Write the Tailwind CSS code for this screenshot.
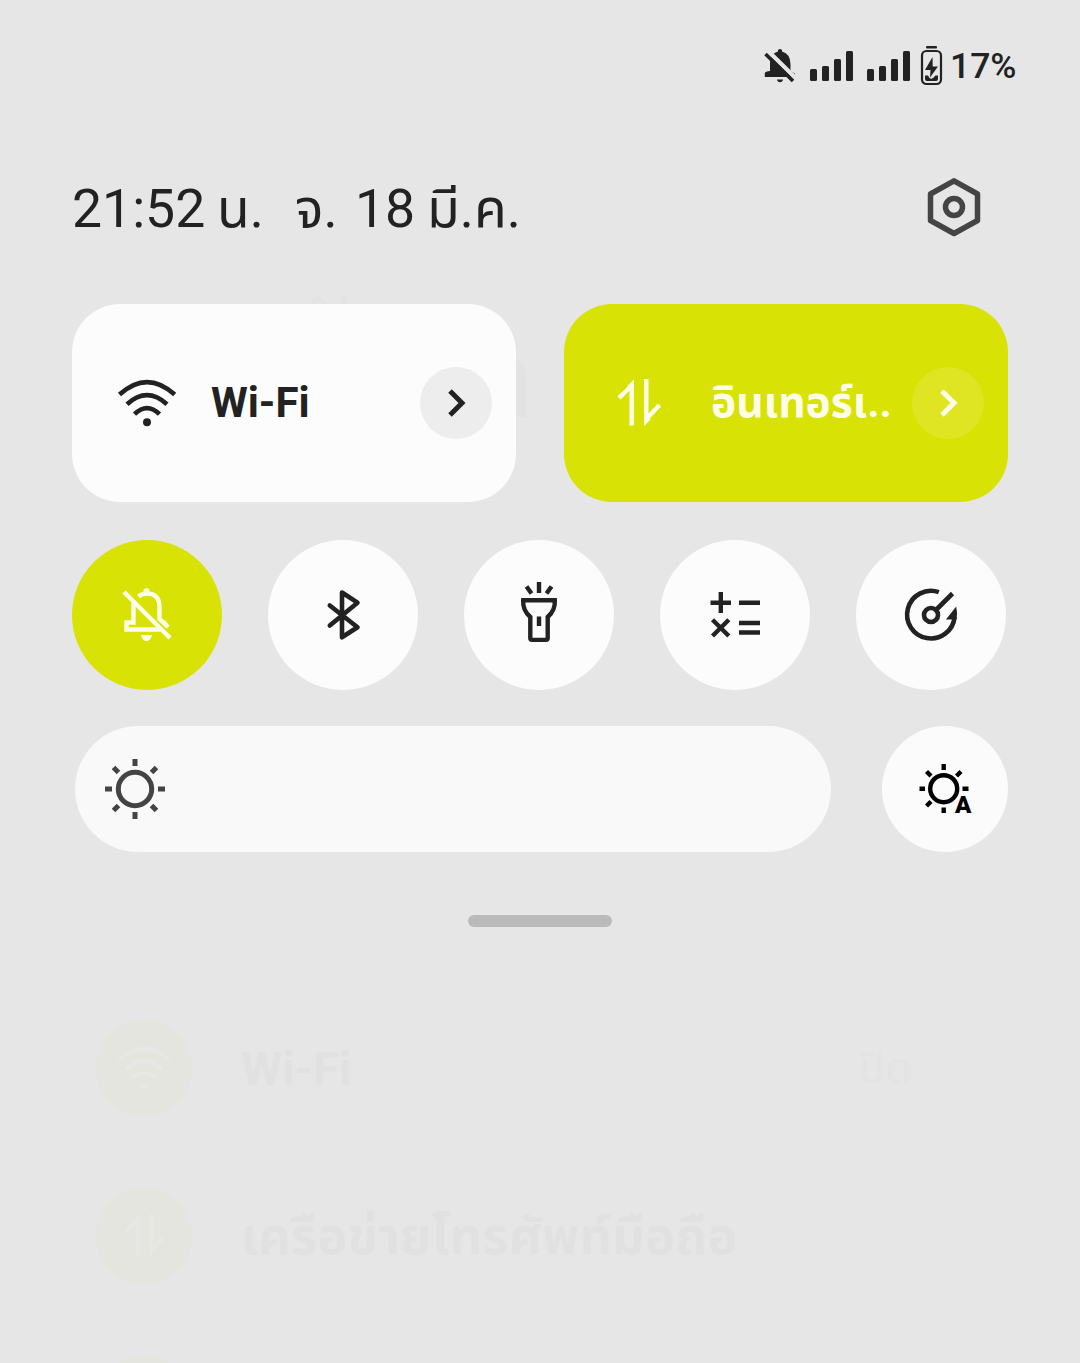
<!DOCTYPE html>
<html lang="th">
<head>
<meta charset="utf-8">
<title>Quick settings</title>
<script src="https://cdn.jsdelivr.net/npm/@tailwindcss/browser@4"></script>
</head>
<body class="bg-[#e6e6e6]">
<main class="relative isolate flex h-[1363px] w-[1080px] flex-col overflow-hidden bg-[#e6e6e6] font-['Roboto','Noto_Sans_Thai','Noto_Sans',sans-serif] text-[#222]">

  <!-- Traces of the dimmed page title behind the panel -->
  <div class="absolute left-[510px] top-[360px] -z-10 h-[57px] w-4 rounded-tr-xl bg-[#e2e2e2]"></div>
  <div class="absolute left-[311px] top-[297px] -z-10 h-3 w-3.5 rounded-full border-4 border-[#e3e3e3]"></div>
  <div class="absolute left-[341px] top-[296px] -z-10 h-3 w-1.5 bg-[#e3e3e3]"></div>

  <!-- Status bar -->
  <header class="flex h-[132px] shrink-0 items-center justify-end pr-16">
    <svg class="h-[44px] w-[184px] shrink-0" viewBox="762 44 184 44" fill="#222">
      <path d="M771.500 56.500 Q774 52.500 778 51.500 V50 Q780 48 782 50 V51.500 Q790.500 54 790.500 64 V71 L794.800 73.500 V77 H764.800 V73 Q765.500 71.500 770 71 V62 Z"/>
      <path d="M777 79.500 H783 Q782.500 82.300 780 82.300 Q777.500 82.300 777 79.500 Z"/>
      <path d="M768 51 L797 79.500" stroke="#e6e6e6" stroke-width="4.500" fill="none"/>
      <path d="M765.500 54 L793 81" stroke="#222" stroke-width="3.600" fill="none"/>
      <rect x="810" y="69" width="7" height="12" rx="1.500"/><rect x="822" y="66" width="7" height="15" rx="1.500"/><rect x="834" y="59" width="7" height="22" rx="1.500"/><rect x="846" y="51" width="7" height="30" rx="1.500"/>
      <rect x="867" y="69" width="7" height="12" rx="1.500"/><rect x="879" y="66" width="7" height="15" rx="1.500"/><rect x="891" y="59" width="7" height="22" rx="1.500"/><rect x="903" y="51" width="7" height="30" rx="1.500"/>
      <rect x="926" y="46" width="11" height="2.400" rx="1"/>
      <rect x="922" y="51" width="19" height="33" rx="4.500" fill="none" stroke="#222" stroke-width="2.200"/>
      <path d="M932.500 57 L925 70 H930.500 L930 77.500 L938 66.500 H932.700 Z"/>
      <path d="M925 75.500 H928 L929.500 78 Q931 79.500 933 78 L935.500 75.500 H938 V79 Q938 81 936 81 H927 Q925 81 925 79 Z"/>
    </svg>
    <span class="ml-[4px] w-[66px] whitespace-nowrap text-[35.500px] font-medium leading-[44px]">17%</span>
  </header>

  <!-- Clock, date, settings -->
  <section class="flex h-[172px] shrink-0 items-start justify-between pl-[72px] pr-[98px] pt-[44px]">
    <div class="flex whitespace-pre text-[53.5px] leading-[66px]">
      <span class="w-[145px]">21:52</span><span class="w-[78px]">น.</span><span class="w-[60px]">จ.</span><span class="w-[72px]">18</span><span>มี.ค.</span>
    </div>
    <svg class="h-[62px] w-[56px]" viewBox="926 176 56 62" fill="none" stroke="#444">
      <path d="M954 180.800 L977.500 194 V220.500 L954 233.500 L930.500 220.500 V194 Z" stroke-width="5.500" stroke-linejoin="round"/>
      <circle cx="954" cy="207" r="8.500" stroke-width="5.500"/>
    </svg>
  </section>

  <!-- Large tiles -->
  <section class="flex shrink-0 gap-12 px-[72px]">
    <div class="flex h-[198px] w-[444px] items-center rounded-[48px] bg-[#fcfcfc] pl-[44px] pr-6">
      <svg class="h-[50px] w-[62px]" viewBox="116 377 62 50" fill="none" stroke="#222" stroke-width="4.600">
        <path d="M119.500 393.500 Q147 368.700 174.700 393.500"/>
        <path d="M127 403.200 Q147 385 167 403.200"/>
        <path d="M134.500 413.200 Q147 401 159.500 413.200"/>
        <circle cx="147" cy="421.200" r="4" fill="#222" stroke="none"/>
      </svg>
      <span class="ml-[33px] whitespace-nowrap text-[42px] font-bold leading-none">Wi-Fi</span>
      <span class="ml-auto flex size-[72px] items-center justify-center rounded-full bg-[#ededed]">
        <svg class="size-[36px]" viewBox="0 0 36 36" fill="none" stroke="#222" stroke-width="5"><path d="M12 6 L24 18 L12 30"/></svg>
      </span>
    </div>
    <div class="flex h-[198px] w-[444px] items-center rounded-[48px] bg-[#d9e205] pl-[52px] pr-6 text-[#fdffe8]">
      <svg class="h-[52px] w-[46px]" viewBox="616 377 46 52" fill="none" stroke="currentColor" stroke-width="4.400">
        <path d="M619 398 L631.700 385.500 V425.500"/><path d="M646.300 379 V419 L659.500 405"/>
        <path d="M634 379.500 V386 H627 Z M644.200 426 V419 H651 Z" fill="currentColor" stroke="none"/>
      </svg>
      <span class="ml-[49px] whitespace-nowrap text-[42.5px] font-bold leading-none">อินเทอร์เ..</span>
      <span class="ml-auto flex size-[72px] shrink-0 items-center justify-center rounded-full bg-[#dfe522]">
        <svg class="size-[36px]" viewBox="0 0 36 36" fill="none" stroke="currentColor" stroke-width="5"><path d="M12 6 L24 18 L12 30"/></svg>
      </span>
    </div>
  </section>

  <!-- Round toggles -->
  <section class="mt-[38px] flex shrink-0 gap-[46px] pl-[72px]">
    <div class="size-[150px] rounded-full bg-[#d9e205]">
      <svg class="size-[150px]" viewBox="72 540 150 150" fill="none" stroke="#fdffe8" stroke-width="4.400">
        <path d="M138.500 596.500 Q142 593.500 146.500 593.500 Q159.500 593.500 159.500 607 V619 L168 627"/>
        <path d="M144 591.500 V589.500 Q146.500 587.500 149 589.500 V591.500" fill="#fdffe8" stroke-width="1"/>
        <path d="M133.500 603 V622.500 H126.500 V629.500 H162"/>
        <path d="M159 619.500 H163 Q168 621.500 169 627.500 L160.500 619.500 Z" fill="#fdffe8" stroke="none"/>
        <path d="M124 592 L170 638"/>
        <path d="M141 635 H152 Q150.500 641 146.500 641 Q142.500 641 141 635 Z" fill="#fdffe8" stroke="none"/>
      </svg>
    </div>
    <div class="size-[150px] rounded-full bg-[#fcfcfc]">
      <svg class="size-[150px]" viewBox="268 540 150 150" fill="none" stroke="#222" stroke-width="4.600" stroke-linecap="round" stroke-linejoin="round">
        <path d="M329.800 605.500 L357.500 627.300 L342 637.300 V592.500 L357.500 602.700 L329.800 625.500"/>
      </svg>
    </div>
    <div class="size-[150px] rounded-full bg-[#fcfcfc]">
      <svg class="size-[150px]" viewBox="464 540 150 150" fill="none" stroke="#222" stroke-width="4.400">
        <path d="M539 582 V593 M526.500 586.500 L531.500 593.500 M551.500 586.500 L546.500 593.500 M539 616.500 V626"/>
        <path d="M523.200 600.300 H554.800 Q555.500 610 547.700 617 V638 Q547.700 639.900 545.800 639.900 H532.200 Q530.300 639.900 530.300 638 V617 Q522.500 610 523.200 600.300 Z"/>
      </svg>
    </div>
    <div class="size-[150px] rounded-full bg-[#fcfcfc]">
      <svg class="size-[150px]" viewBox="660 540 150 150" fill="none" stroke="#222" stroke-width="4.400">
        <path d="M710.500 602.700 H731 M720.800 592 V613 M739 602.700 H760 M739 623 H760 M739 632.500 H760 M712.500 619.700 L728.800 636 M728.800 619.700 L712.500 636"/>
      </svg>
    </div>
    <div class="size-[150px] rounded-full bg-[#fcfcfc]">
      <svg class="size-[150px]" viewBox="856 540 150 150" fill="none" stroke="#222" stroke-width="4.600">
        <path d="M938.800 592.200 A23.800 23.800 0 1 0 954.600 617"/>
        <circle cx="931" cy="615" r="7"/>
        <path d="M936 610 L952.500 593.500"/>
        <path d="M956.200 606.500 Q957.800 613 956.500 619.500 H946 Z" fill="#222" stroke="none"/>
      </svg>
    </div>
  </section>

  <!-- Brightness -->
  <section class="mt-9 flex shrink-0 justify-between pl-[75px] pr-[72px]">
    <div class="flex h-[126px] w-[756px] items-center rounded-full bg-[#f9f9f9] pl-[28px]">
      <svg class="size-16" viewBox="-32 -32 64 64" fill="none" stroke="#444" stroke-width="5">
        <circle r="16.700"/>
        <path d="M0 -30 V-23 M0 30 V23 M-30 0 H-23 M30 0 H23 M-21.500 -21.500 L-16.500 -16.500 M21.500 -21.500 L16.500 -16.500 M-21.500 21.500 L-16.500 16.500 M21.500 21.500 L16.500 16.500"/>
      </svg>
    </div>
    <div class="relative size-[126px] rounded-full bg-[#fbfbfb] text-black">
      <svg class="size-[126px]" viewBox="882 726 126 126" fill="none" stroke="#000" stroke-width="4.400">
        <circle cx="943.700" cy="788.700" r="13.500"/>
        <path d="M943.700 764 V770 M943.700 813 V807.500 M919.500 788.700 H925 M962.500 788.700 H968.500 M926.500 771.500 L931 776 M961 771.500 L956.500 776 M926.500 806 L931 801.500"/>
      </svg>
      <span class="absolute left-[73px] top-[67px] text-[24px] font-black leading-6">A</span>
    </div>
  </section>

  <div class="mx-auto mt-[63px] h-3 w-36 shrink-0 rounded-full bg-[#bababa]"></div>

  <!-- Dimmed settings list behind the panel -->
  <section class="mt-[93px] flex shrink-0 flex-col gap-[72px] pl-24 text-[#e1e1e1]">
    <div class="flex h-24 items-center">
      <span class="flex size-24 items-center justify-center rounded-full bg-[#e4e5de]">
        <svg class="h-[46px] w-[58px]" viewBox="116 377 62 50" fill="none" stroke="#e7e7e5" stroke-width="4.600"><path d="M119.500 393.500 Q147 368.700 174.700 393.500 M127 403.200 Q147 385 167 403.200 M134.500 413.200 Q147 401 159.500 413.200"/><circle cx="147" cy="421.200" r="4" fill="#e7e7e5" stroke="none"/></svg>
      </span>
      <span class="ml-[49px] w-[618px] text-[47px] font-bold leading-none">Wi-Fi</span>
      <span class="text-[43px] leading-none text-[#e3e3e3]">ปิด</span>
    </div>
    <div class="flex h-24 items-center">
      <span class="flex size-24 items-center justify-center rounded-full bg-[#e4e5de]">
        <svg class="h-[48px] w-[43px]" viewBox="616 377 46 52" fill="none" stroke="#e7e7e5" stroke-width="4.600"><path d="M619 398 L631.700 385.500 V425.500 M646.300 379 V419 L659.500 405"/></svg>
      </span>
      <span class="ml-[49px] whitespace-nowrap text-[51px] font-bold leading-none">เครือข่ายโทรศัพท์มือถือ</span>
    </div>
    <div class="size-24 rounded-full bg-[#e4e5de]"></div>
  </section>
</main>
</body>
</html>
